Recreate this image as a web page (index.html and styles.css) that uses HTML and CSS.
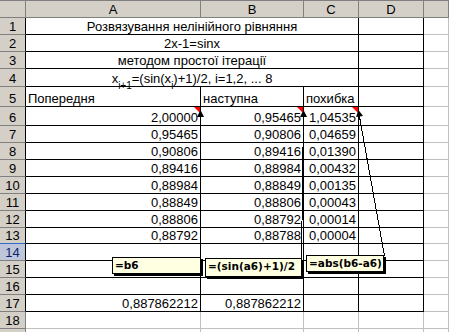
FILE: index.html
```html
<!DOCTYPE html>
<html lang="uk">
<head>
    <meta charset="UTF-8">
    <meta name="viewport" content="width=device-width, initial-scale=1.0">
    <title>Метод простої ітерації</title>
    <link rel="stylesheet" href="styles.css">
</head>
<body>
    <div class="sheet">
        <div class="row head">
            <div class="hd"></div>
            <div class="hd">A</div>
            <div class="hd">B</div>
            <div class="hd">C</div>
            <div class="hd">D</div>
            <div class="hd"></div>
        </div>

        <div class="row">
            <div class="rh">1</div>
            <div class="cell span3 center">Розвязування нелінійного рівняння</div>
            <div class="cell"></div>
            <div class="cell grid"></div>
        </div>
        <div class="row">
            <div class="rh">2</div>
            <div class="cell span3 center">2x-1=sinx</div>
            <div class="cell"></div>
            <div class="cell grid"></div>
        </div>
        <div class="row">
            <div class="rh">3</div>
            <div class="cell span3 center">методом простої ітерації</div>
            <div class="cell"></div>
            <div class="cell grid"></div>
        </div>
        <div class="row h18">
            <div class="rh">4</div>
            <div class="cell span3 center">x<sub>i+1</sub>=(sin(x<sub>i</sub>)+1)/2, i=1,2, ... 8</div>
            <div class="cell"></div>
            <div class="cell grid"></div>
        </div>
        <div class="row h20">
            <div class="rh">5</div>
            <div class="cell">Попередня</div>
            <div class="cell">наступна</div>
            <div class="cell">похибка</div>
            <div class="cell"></div>
            <div class="cell grid"></div>
        </div>

        <!-- iterations -->
        <div class="row h19">
            <div class="rh">6</div>
            <div class="cell num">2,00000</div>
            <div class="cell num">0,95465</div>
            <div class="cell num">1,04535</div>
            <div class="cell"></div>
            <div class="cell grid"></div>
        </div>
        <div class="row">
            <div class="rh">7</div>
            <div class="cell num">0,95465</div>
            <div class="cell num">0,90806</div>
            <div class="cell num">0,04659</div>
            <div class="cell"></div>
            <div class="cell grid"></div>
        </div>
        <div class="row">
            <div class="rh">8</div>
            <div class="cell num">0,90806</div>
            <div class="cell num">0,89416</div>
            <div class="cell num">0,01390</div>
            <div class="cell"></div>
            <div class="cell grid"></div>
        </div>
        <div class="row">
            <div class="rh">9</div>
            <div class="cell num">0,89416</div>
            <div class="cell num">0,88984</div>
            <div class="cell num">0,00432</div>
            <div class="cell"></div>
            <div class="cell grid"></div>
        </div>
        <div class="row">
            <div class="rh">10</div>
            <div class="cell num">0,88984</div>
            <div class="cell num">0,88849</div>
            <div class="cell num">0,00135</div>
            <div class="cell"></div>
            <div class="cell grid"></div>
        </div>
        <div class="row">
            <div class="rh">11</div>
            <div class="cell num">0,88849</div>
            <div class="cell num">0,88806</div>
            <div class="cell num">0,00043</div>
            <div class="cell"></div>
            <div class="cell grid"></div>
        </div>
        <div class="row">
            <div class="rh">12</div>
            <div class="cell num">0,88806</div>
            <div class="cell num">0,88792</div>
            <div class="cell num">0,00014</div>
            <div class="cell"></div>
            <div class="cell grid"></div>
        </div>
        <div class="row h16">
            <div class="rh active-above">13</div>
            <div class="cell num">0,88792</div>
            <div class="cell num">0,88788</div>
            <div class="cell num">0,00004</div>
            <div class="cell"></div>
            <div class="cell grid"></div>
        </div>

        <div class="row">
            <div class="rh active">14</div>
            <div class="cell"></div>
            <div class="cell"></div>
            <div class="cell"></div>
            <div class="cell"></div>
            <div class="cell grid"></div>
        </div>
        <div class="row">
            <div class="rh">15</div>
            <div class="cell"></div>
            <div class="cell"></div>
            <div class="cell"></div>
            <div class="cell"></div>
            <div class="cell grid"></div>
        </div>
        <div class="row">
            <div class="rh">16</div>
            <div class="cell"></div>
            <div class="cell"></div>
            <div class="cell"></div>
            <div class="cell"></div>
            <div class="cell grid"></div>
        </div>
        <div class="row">
            <div class="rh">17</div>
            <div class="cell num">0,887862212</div>
            <div class="cell num">0,887862212</div>
            <div class="cell"></div>
            <div class="cell"></div>
            <div class="cell grid"></div>
        </div>
        <div class="row">
            <div class="rh plain">18</div>
            <div class="cell grid"></div>
            <div class="cell grid"></div>
            <div class="cell grid"></div>
            <div class="cell grid"></div>
            <div class="cell grid"></div>
        </div>
        <div class="row">
            <div class="rh plain"></div>
            <div class="cell grid"></div>
            <div class="cell grid"></div>
            <div class="cell grid"></div>
            <div class="cell grid"></div>
            <div class="cell grid"></div>
        </div>

        <!-- comment arrows and red markers -->
        <svg class="arrows" width="449" height="332" viewBox="0 0 449 332">
            <g fill="#ff0000">
                <polygon points="194,107 200,107 200,113"/>
                <polygon points="297,107 303,107 303,113"/>
                <polygon points="352,107 358,107 358,113"/>
            </g>
            <g stroke="#000" stroke-width="1" shape-rendering="crispEdges">
                <line x1="200.5" y1="111" x2="200.5" y2="257"/>
                <line x1="303.5" y1="111" x2="301.5" y2="258"/>
                <line x1="358.5" y1="111" x2="384.5" y2="256"/>
            </g>
            <g fill="#000">
                <polygon points="200.5,110 197,117 204,117"/>
                <polygon points="303.5,110 300,117 307,117"/>
                <polygon points="358.5,110 356,117 363,116"/>
            </g>
        </svg>

        <div class="note note-a">=b6</div>
        <div class="note note-b">=(sin(a6)+1)/2</div>
        <div class="note note-c">=abs(b6-a6)</div>
    </div>
</body>
</html>
```

FILE: styles.css
```css
* {
    margin: 0;
    padding: 0;
    box-sizing: border-box;
}

body {
    background: #fff;
    color: #000;
    font-family: "Liberation Sans", Arial, sans-serif;
    font-size: 13px;
    overflow: hidden;
}

.sheet {
    position: relative;
    width: 449px;
}

/* one grid per row, same column widths everywhere */
.row {
    display: grid;
    grid-template-columns: 26px 175px 103px 55px 65px 25px;
    height: 17px;
}

.row.head { height: 18px; }
.row.h16 { height: 16px; }
.row.h18 { height: 18px; }
.row.h19 { height: 19px; }
.row.h20 { height: 20px; }

.hd {
    background: #d4d0c8;
    border-top: 1px solid #808080;
    border-right: 1px solid #808080;
    border-bottom: 1px solid #808080;
    display: flex;
    align-items: center;
    justify-content: center;
    line-height: 15px;
}

.rh {
    background: #d4d0c8;
    border-right: 1px solid #000;
    border-bottom: 1px solid #808080;
    display: flex;
    align-items: flex-end;
    justify-content: center;
    line-height: 15px;
}

.rh.plain {
    border-right-color: #808080;
}

.rh.active-above {
    border-bottom-color: #316ac5;
}

.rh.active {
    background: #bfc6da;
    color: #0a246a;
}

.cell {
    border-right: 1px solid #000;
    border-bottom: 1px solid #000;
    display: flex;
    align-items: flex-end;
    padding: 0 2px;
    line-height: 15px;
    white-space: nowrap;
}

.cell.grid {
    border-color: #c0c0c0;
}

.span3 {
    grid-column: span 3;
}

.center {
    justify-content: center;
}

.num {
    justify-content: flex-end;
}

sub {
    font-size: 10px;
    line-height: 0;
    vertical-align: -1px;
}

.arrows {
    position: absolute;
    left: 0;
    top: 0;
    pointer-events: none;
}

/* cell comments */
.note {
    position: absolute;
    background: #ffffe1;
    border: 1px solid #000;
    box-shadow: 2px 2px 0 #000;
    font-family: "DejaVu Sans", Verdana, sans-serif;
    font-size: 10.5px;
    font-weight: bold;
    line-height: 13px;
    padding: 1px 2px;
    white-space: nowrap;
}

.note-a {
    left: 112px;
    top: 257px;
    width: 89px;
    height: 17px;
}

.note-b {
    left: 205px;
    top: 258px;
    width: 97px;
    height: 19px;
}

.note-c {
    left: 306px;
    top: 255px;
    width: 78px;
    height: 17px;
}
```
